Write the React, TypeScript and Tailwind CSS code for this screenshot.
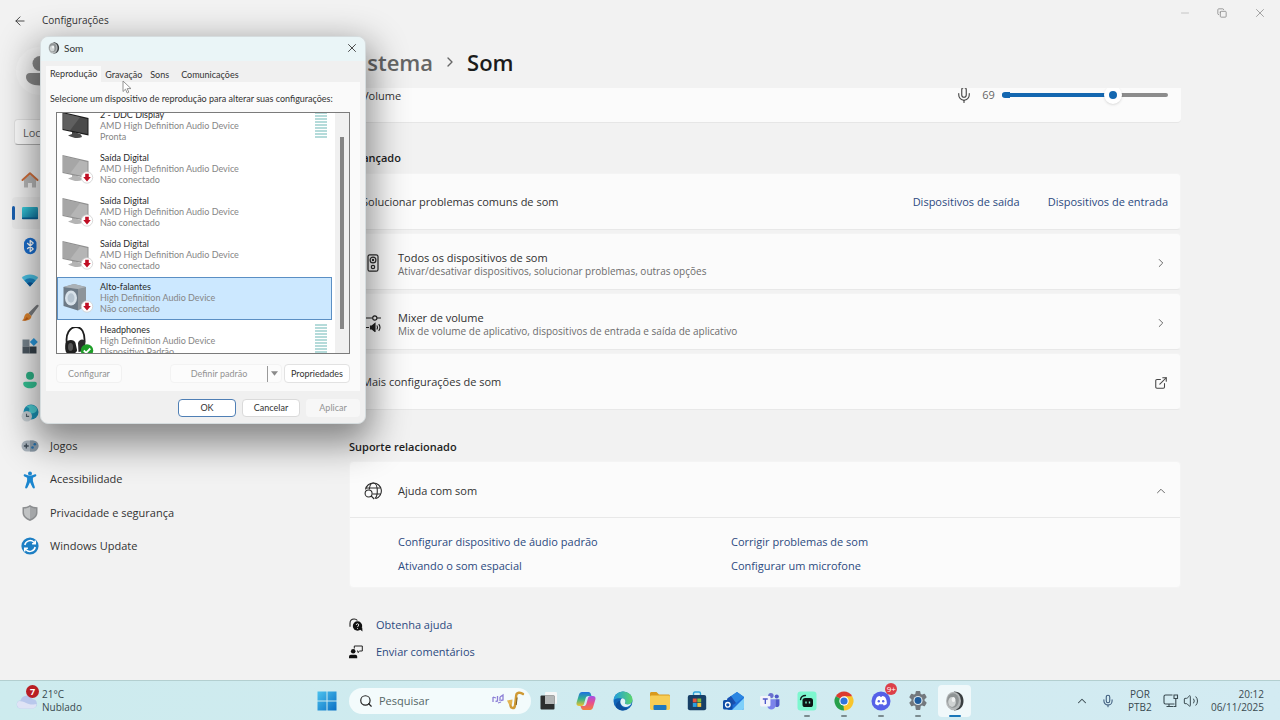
import { useState } from "react";
import type { ReactNode } from "react";
import { ArrowLeft, ChevronDown, ChevronRight, ChevronUp, Copy, ExternalLink, Mic, Minus, Search, Volume2, X } from "lucide-react";

/* ---------- Ícones da barra lateral ---------- */

const HomeIcon = () => (
  <svg viewBox="0 0 18 18" className="h-[18px] w-[18px]">
    <path d="M3 8.5 9 3.5l6 5V16a.6.6 0 0 1-.6.6H11V12H7v4.6H3.6A.6.6 0 0 1 3 16z" fill="#b9b9b9" />
    <path d="M1.5 9 9 2.2 16.5 9" fill="none" stroke="#d2703c" strokeWidth="2" strokeLinecap="round" strokeLinejoin="round" />
  </svg>
);

const SystemIcon = () => (
  <svg viewBox="0 0 18 18" className="h-[18px] w-[18px]">
    <defs>
      <linearGradient id="sys" x1="0" y1="0" x2="1" y2="1">
        <stop offset="0" stopColor="#3bd3e0" />
        <stop offset="1" stopColor="#0f6d9c" />
      </linearGradient>
    </defs>
    <rect x="1" y="3" width="16" height="12" rx="1.2" fill="url(#sys)" />
    <rect x="1" y="13.5" width="16" height="1.8" rx=".8" fill="#0a5f93" />
  </svg>
);

const BluetoothIcon = () => (
  <svg viewBox="0 0 18 18" className="h-[18px] w-[18px]">
    <rect x="3" y=".8" width="12.5" height="16.4" rx="6.2" fill="#1a6fd0" />
    <path d="m6.2 6 6 6L9.200 14.5V3.5L12.200 6l-6 6" fill="none" stroke="#fff" strokeWidth="1.3" strokeLinejoin="round" />
  </svg>
);

const WifiIcon = () => (
  <svg viewBox="0 0 18 18" className="h-[18px] w-[18px]">
    <path d="M9 15.5.8 6.8C5.2 2.4 12.8 2.4 17.2 6.8z" fill="#4cc3e6" />
    <path d="M9 15.5 3.4 9.500c3.100-2.900 8.100-2.900 11.200 0z" fill="#1b86c5" />
    <path d="M9 15.5 6 12.300c1.700-1.500 4.300-1.500 6 0z" fill="#0f5596" />
  </svg>
);

const BrushIcon = () => (
  <svg viewBox="0 0 18 18" className="h-[18px] w-[18px]">
    <path d="M17.3.9c.6.6.3 1.300-.1 1.900L10.400 12 7.300 9.300 15.300 1.300c.6-.6 1.400-.9 2-.4z" fill="#7c7f83" />
    <path d="M7.3 9.300 10.400 12c.2 3.500-4.600 5.600-9.400 4.300 2.100-.9 1.600-2.700 2.700-4.900.8-1.600 2-2.200 3.600-2.100z" fill="#e0862f" />
    <path d="M1 16.300c2.300-.3 3.600-1.500 4.700-3.400l1.800 1.500C5.600 16.400 3.500 17 1 16.300z" fill="#c35f16" />
  </svg>
);

const AppsIcon = () => (
  <svg viewBox="0 0 18 18" className="h-[18px] w-[18px]">
    <rect x="1.5" y="2.5" width="7" height="7" fill="#7a8791" />
    <rect x="1.5" y="9.5" width="7" height="7" fill="#4d5962" />
    <rect x="8.5" y="9.5" width="7" height="7" fill="#36424b" />
    <path d="m12.8.9 4 4-4 4-4-4z" fill="#2a9be0" />
  </svg>
);

const AccountIcon = () => (
  <svg viewBox="0 0 18 18" className="h-[18px] w-[18px]">
    <circle cx="9" cy="4.8" r="4" fill="#2fb488" />
    <path d="M2.2 12.500c0-1 .8-1.800 1.800-1.800h10c1 0 1.800.8 1.800 1.800 0 3-2.800 4.800-6.800 4.800s-6.800-1.800-6.800-4.800z" fill="#35c596" />
  </svg>
);

const ClockIcon = () => (
  <svg viewBox="0 0 18 18" className="h-[18px] w-[18px]">
    <circle cx="10" cy="8" r="7.5" fill="#1c94b8" />
    <path d="M5 3c3 0 4 2 3 4s2 3 5 2 4-4 2-6a7.500 7.500 0 0 0-10 0z" fill="#4fd0d6" />
    <circle cx="5.8" cy="12.2" r="5.2" fill="#c9d1d6" />
    <path d="M5.5 9.800v2.600h2.600" fill="none" stroke="#50606a" strokeWidth="1.1" />
  </svg>
);

const GamesIcon = () => (
  <svg viewBox="0 0 18 18" className="h-[18px] w-[18px]">
    <rect x=".5" y="3.5" width="17" height="11" rx="5.5" fill="#a9b3bc" />
    <path d="M9 3.5h3a5.500 5.500 0 0 1 0 11H9z" fill="#8796a3" />
    <path d="M5.3 6.600v4.800M2.900 9h4.800" stroke="#3d4a55" strokeWidth="1.3" />
    <circle cx="13.8" cy="7.3" r="1.3" fill="#256ea8" />
    <circle cx="11.5" cy="10.5" r="1.3" fill="#256ea8" />
  </svg>
);

const AccessibilityIcon = () => (
  <svg viewBox="0 0 18 18" className="h-[18px] w-[18px]">
    <circle cx="9" cy="2.4" r="2" fill="#1b86cf" />
    <path d="M2.8 3.800c.5-.7 1.200-.6 1.800-.3 2.800 1.500 6 1.500 8.800 0 .7-.3 1.400-.3 1.800.3.3.7 0 1.400-.7 1.700l-2.600 1.200v3.400l1.900 5.800c.2.700-.1 1.300-.8 1.500-.7.200-1.200-.2-1.500-.8L9 11.300l-2.500 5.300c-.3.600-.8 1-1.500.8-.7-.2-1-.8-.8-1.500l1.900-5.800V6.700L3.500 5.500c-.7-.3-1-1-.7-1.700z" fill="#1b86cf" />
  </svg>
);

const ShieldIcon = () => (
  <svg viewBox="0 0 18 18" className="h-[18px] w-[18px]">
    <path d="M9 1c2 1.700 4.600 2.200 7.500 2.200v5.300c0 4-3 6.700-7.500 8.500C4.500 15.200 1.500 12.500 1.500 8.500V3.200C4.400 3.200 7 2.700 9 1z" fill="#8b8d8f" />
    <path d="M9 2.800c1.700 1.200 3.700 1.700 6 1.800v3.900c0 3.200-2.300 5.300-6 6.800z" fill="#a4a6a8" />
    <path d="M9 2.800C7.300 4 5.300 4.500 3 4.600v3.900c0 3.200 2.300 5.300 6 6.800z" fill="#c0c2c3" />
  </svg>
);

const UpdateIcon = () => (
  <svg viewBox="0 0 18 18" className="h-[18px] w-[18px]">
    <circle cx="9" cy="9" r="8.6" fill="#1d7fc4" />
    <path d="M3.8 8A5.400 5.400 0 0 1 13 5.300L14.300 6.600M14.300 3.600v3.200h-3.200M14.200 10A5.400 5.400 0 0 1 5 12.700L3.700 11.400M3.700 14.400v-3.200h3.200" fill="none" stroke="#fff" strokeWidth="1.5" />
  </svg>
);

/* ---------- Ícones do conteúdo ---------- */

const SpeakerBoxIcon = () => (
  <svg viewBox="0 0 18 18" className="h-[18px] w-[18px]" fill="none" stroke="#2b2b2b" strokeWidth="1.2">
    <rect x="4" y=".8" width="10" height="16.4" rx="1.8" />
    <circle cx="9" cy="6" r="2.9" />
    <circle cx="9" cy="6" r=".6" fill="#2b2b2b" />
    <circle cx="9" cy="13" r="1.7" />
  </svg>
);

const MixerIcon = () => (
  <svg viewBox="0 0 18 18" className="h-[18px] w-[18px]" fill="none" stroke="#1f1f1f" strokeWidth="1.1">
    <path d="M1 4h7.500M13 4h4M1 13.500h4" />
    <circle cx="10.800" cy="4" r="2.1" />
    <path d="M6.500 12h1.500l3-2.500v8L8 15H6.500z" fill="#1f1f1f" />
    <path d="M12.800 11.500c.8 1.200.8 2.800 0 4M14.700 10.200c1.500 1.900 1.500 4.700 0 6.600" />
  </svg>
);

const GlobeSearchIcon = () => (
  <svg viewBox="0 0 18 18" className="h-[18px] w-[18px]" fill="none" stroke="#2b2b2b" strokeWidth="1.1">
    <path d="M1.500 7.500a8 8 0 1 1 10.300 9.100" />
    <path d="M5.300 7.500C5.600 3.800 7.100 1 9.300 1c2.400 0 4 3.500 4 8 0 3.500-.9 6.300-2.400 7.500M2 6h14.700M8.500 12h8.200" />
    <circle cx="4.600" cy="11.5" r="3.5" />
    <path d="m7.200 14 3 3" />
  </svg>
);

const HelpIcon = () => (
  <svg viewBox="0 0 14 14" className="h-3.5 w-3.5">
    <path d="M1 7.500V5.300C1 2.800 2.800 1 5.200 1c1.400 0 2.500.6 3.200 1.500M1 6.500v2.300" fill="none" stroke="#222" strokeWidth="1.1" />
    <circle cx="8.500" cy="8" r="4.7" fill="#111" />
    <path d="m10.500 11 3 2.500-.3-4z" fill="#111" />
    <path d="M7.200 7c0-1.700 2.600-1.700 2.600 0 0 1-1.300 1-1.300 2.100M8.500 10v.8" fill="none" stroke="#f2f2f2" strokeWidth=".9" />
  </svg>
);

const FeedbackIcon = () => (
  <svg viewBox="0 0 14 14" className="h-3.5 w-3.5">
    <circle cx="4.200" cy="6.300" r="2.3" fill="#111" />
    <path d="M0 13.300v-1.600c0-1 .8-1.900 1.800-1.900h4.600c1 0 1.800.9 1.800 1.900v1.600z" fill="#111" />
    <path d="M5.300 3.500V1h8v5h-2.600L9 7.600V6H8" fill="none" stroke="#222" strokeWidth="1" />
  </svg>
);

/* ---------- Ícones da janela Som ---------- */

const SpeakerConeIcon = ({ className }: { className: string }) => (
  <svg viewBox="0 0 20 20" className={className}>
    <path d="M9 .5c6 0 9.500 4 9.500 9.500S15 19.500 9 19.500z" fill="#3a3e40" />
    <ellipse cx="8.500" cy="10" rx="7.5" ry="9.2" fill="#b4b8b9" />
    <ellipse cx="8" cy="9.500" rx="5.8" ry="7.3" fill="#8f9495" />
    <ellipse cx="7" cy="11" rx="3.8" ry="5" fill="#cfd3d3" />
    <ellipse cx="8.500" cy="8.500" rx="1.8" ry="2.5" fill="#f0f2f2" />
  </svg>
);

const DownBadge = () => (
  <g>
    <circle cx="25" cy="22.500" r="5.700" fill="#fff" stroke="#c9c9c9" strokeWidth=".7" />
    <path d="M23.200 18.800h3.600v3.200h2L25 26.400l-3.800-4.400h2z" fill="#c00e24" />
  </g>
);

const MonitorIcon = ({ off }: { off?: boolean }) => (
  <svg viewBox="0 0 32 30" className="h-[30px] w-8">
    <path d="m10 19 9 3.500 1 2.500c-4 2-9 1-14-1.500l4-1.500z" fill={off ? "#b4b4b4" : "#4b4b4b"} />
    <path d="M.5 0 26.500 6v17.500L.5 18z" fill={off ? "#8f8f8f" : "#1c1c1c"} />
    <path d="M1.200 1.200 25.500 7v15L1.200 17z" fill={off ? "#b5b5b5" : "#4a4a4a"} />
    <path d="M1.200 1.200 18 5.200 8 18.400 1.200 17z" fill={off ? "#a6a6a6" : "#5f5f5f"} />
    {off && <DownBadge />}
  </svg>
);

const SpeakerIcon = () => (
  <svg viewBox="0 0 32 30" className="h-[30px] w-8">
    <path d="M1.500 3 12 0l12 3v19l-8 4.500z" fill="#8d949a" />
    <path d="m1.500 3 14.500 2v21.500L1.500 22z" fill="#6d7a86" />
    <path d="M1.500 3 12 0l12 3-8 2z" fill="#aab1b7" />
    <ellipse cx="9" cy="14" rx="6" ry="7.500" fill="#d8e2ea" />
    <ellipse cx="9" cy="14" rx="3.500" ry="4.700" fill="#b6c4d0" />
    <DownBadge />
  </svg>
);

const HeadphonesIcon = () => (
  <svg viewBox="0 0 32 30" className="h-[30px] w-8">
    <path d="M5 17C3 7 8 0 14 0c6 0 9 6 8.500 15" fill="none" stroke="#1d1d1d" strokeWidth="1.800" />
    <path d="M3.500 16c2-4 9-4 10 0l1.500 7c0 4-9 6-11 2-1-2-1-6-.5-9z" fill="#1f1f1f" />
    <path d="M16 16c1-4 6-5 7.500-1l-1 9-6 1z" fill="#2c2c2c" />
    <ellipse cx="8.500" cy="20" rx="2.500" ry="4" fill="#555" />
    <circle cx="25" cy="23.500" r="6.200" fill="#1e9e28" />
    <path d="m21.800 23.500 2.300 2.300 4.200-4.300" fill="none" stroke="#fff" strokeWidth="1.800" />
  </svg>
);

/* ---------- Ícones da barra de tarefas ---------- */

const WindowsIcon = () => (
  <svg viewBox="0 0 20 20" className="h-5 w-5">
    <defs>
      <linearGradient id="win" x1="0" y1="0" x2="1" y2="1">
        <stop offset="0" stopColor="#4cc2ee" />
        <stop offset="1" stopColor="#0a6fc4" />
      </linearGradient>
    </defs>
    <path d="M.5.500h9v9h-9zM10.500.500h9v9h-9zM.500 10.500h9v9h-9zM10.500 10.500h9v9h-9z" fill="url(#win)" />
  </svg>
);

const SaxIcon = () => (
  <svg viewBox="0 0 34 20" className="h-5 w-[34px]">
    <path d="M2 6v5M2 6l3 1M6.500 5v5l-2 .5M9 6v4M9 6l3-2v5l-2 .5M7 12l3-1" stroke="#8c7fd6" strokeWidth="1.300" fill="none" />
    <path d="M32 3c-2.500-2-6.500-1.800-6.800 1.500L24 14.500c-.4 3.600-4.200 3.200-4.500 0L19 10.500" fill="none" stroke="#cf9a35" strokeWidth="2.400" strokeLinecap="round" />
    <path d="m16 9.500 5.500-1-.5 5h-3z" fill="#e3b450" />
    <path d="M26.200 6.500 25.200 14" stroke="#7d5a1b" strokeWidth="1" />
  </svg>
);

const TaskViewIcon = () => (
  <svg viewBox="0 0 20 20" className="h-5 w-5">
    <rect x="6" y="1" width="12" height="12" rx="1" fill="#f4f6f6" />
    <rect x="1.500" y="4.500" width="14" height="14" rx="1" fill="#2c2e2e" />
    <rect x="6" y="4.500" width="9.500" height="8.500" fill="#b3b6b6" />
  </svg>
);

const CopilotIcon = () => (
  <svg viewBox="0 0 20 20" className="h-5 w-5">
    <defs>
      <linearGradient id="copA" x1="0" y1="0" x2="0" y2="1">
        <stop offset="0" stopColor="#1b6fe0" />
        <stop offset=".5" stopColor="#33b38d" />
        <stop offset="1" stopColor="#f0c22d" />
      </linearGradient>
      <linearGradient id="copB" x1="0" y1="0" x2="0" y2="1">
        <stop offset="0" stopColor="#a450e8" />
        <stop offset=".5" stopColor="#e8508c" />
        <stop offset="1" stopColor="#f2803a" />
      </linearGradient>
    </defs>
    <path d="M6 1h6.500c1.500 0 2 1 2.400 2.200L15.500 5h-3c-1.500 0-2.400.8-2.900 2.300L8 13c-.4 1.300-1.300 2-2.700 2H3.200C1 15 0 13.500.6 11.500L3 3.500C3.500 2 4.500 1 6 1z" fill="url(#copA)" />
    <path d="M14 19H7.500c-1.500 0-2-1-2.400-2.200L4.500 15h3c1.500 0 2.400-.8 2.900-2.300L12 7c.4-1.300 1.300-2 2.700-2h2.100c2.200 0 3.200 1.500 2.600 3.500L17 16.500c-.5 1.500-1.500 2.500-3 2.500z" fill="url(#copB)" />
  </svg>
);

const EdgeIcon = () => (
  <svg viewBox="0 0 20 20" className="h-5 w-5">
    <defs>
      <linearGradient id="edg" x1="0" y1="0" x2="1" y2="0">
        <stop offset="0" stopColor="#1f9be0" />
        <stop offset="1" stopColor="#5cd66b" />
      </linearGradient>
    </defs>
    <circle cx="10" cy="10" r="9.500" fill="#1166b8" />
    <path d="M.5 9.500C1 4 5 .500 10 .500c5.500 0 9.500 4 9.500 8 0 3-2 5-4.800 5-2 0-3.200-.8-2.700-1.700.8-1 .6-4.300-2.800-4.500C5 7 1.500 7.500.500 9.500z" fill="url(#edg)" />
    <path d="M7.300 10c-1 4.500 2.500 8 8 7-3 3-8 3.200-11 .6C1 14.500 4 10 7.300 10z" fill="#0d4f9c" />
    <path d="M9.200 7.300c3.400.2 3.600 3.500 2.800 4.500-.5.900.7 1.700 2.700 1.700 1.600 0 3-.6 3.900-1.700-.8 2.500-3 4.200-6 4.200-4 0-6-4-5-6.700.3-1 .8-1.700 1.600-2z" fill="#e2f3f6" />
  </svg>
);

const FolderIcon = () => (
  <svg viewBox="0 0 22 20" className="h-5 w-[22px]">
    <path d="M1 2.500C1 1.700 1.600 1 2.500 1h5L10 3.500h9.500c.8 0 1.500.7 1.500 1.500v4H1z" fill="#d99a1e" />
    <rect x="1" y="4.500" width="20" height="14.500" rx="1.400" fill="#f7cd55" />
    <rect x="4.500" y="14" width="13" height="5" rx="1" fill="#1f78c0" />
  </svg>
);

const StoreIcon = () => (
  <svg viewBox="0 0 20 20" className="h-5 w-5">
    <path d="M6.500 5V2.500C6.500 1.700 7 1 8 1h4c1 0 1.500.7 1.500 1.500V5" fill="none" stroke="#2fa5dc" strokeWidth="1.400" />
    <rect x=".8" y="4" width="18.400" height="15.300" rx="2" fill="#173f66" />
    <rect x="5.800" y="7.500" width="3.900" height="3.900" fill="#e8553a" />
    <rect x="10.300" y="7.500" width="3.900" height="3.900" fill="#86bd3a" />
    <rect x="5.800" y="12" width="3.900" height="3.900" fill="#2ba0e0" />
    <rect x="10.300" y="12" width="3.900" height="3.900" fill="#f6c13a" />
  </svg>
);

const OutlookIcon = () => (
  <svg viewBox="0 0 22 20" className="h-5 w-[22px]">
    <path d="M4 8 14 1l7 5v11c0 1-.7 2-2 2H6c-1.200 0-2-1-2-2z" fill="#1d6fd8" />
    <path d="m5 7 9-6 7 5-11 8z" fill="#2a86e2" />
    <path d="M21 7v10c0 1-.7 2-2 2H9z" fill="#7fd0fa" />
    <path d="m4 8 6 6 3-2L8 5z" fill="#1b4fae" />
    <rect x="0" y="9" width="9.500" height="9.500" rx="1.600" fill="#0f4fa8" />
    <circle cx="4.800" cy="13.800" r="2.300" fill="none" stroke="#fff" strokeWidth="1.300" />
  </svg>
);

const TeamsIcon = () => (
  <svg viewBox="0 0 22 20" className="h-[18px] w-5">
    <circle cx="12" cy="4" r="3" fill="#6a70cf" />
    <circle cx="18.500" cy="5" r="2.300" fill="#5059c9" />
    <path d="M8 8h9v7c0 6-9 6-9 0z" fill="#7b83eb" />
    <path d="M17 8h4.500v5.500c0 3-2.500 3.800-4.500 3z" fill="#5059c9" />
    <rect x="0" y="4.500" width="11.500" height="11.500" rx="1.200" fill="#f3f3fb" />
    <path d="M3 7.800h5.500M5.800 7.800v5.500" stroke="#5059c9" strokeWidth="1.500" />
  </svg>
);

const RobotIcon = () => (
  <svg viewBox="0 0 20 20" className="h-5 w-5">
    <rect x=".5" y=".5" width="19" height="19" rx="3" fill="#7df7cf" />
    <path d="M3.500 8.500C4 6 6 4.500 8.500 4.500" fill="none" stroke="#101b1a" strokeWidth="1.300" strokeLinecap="round" />
    <rect x="5.500" y="7" width="10.500" height="9" rx="2.600" fill="#0d1514" />
    <path d="M9 10.500v2M12.500 10.500v2" stroke="#7df7cf" strokeWidth="1.400" />
  </svg>
);

const ChromeIcon = () => (
  <svg viewBox="0 0 20 20" className="h-5 w-5">
    <path d="M10 10 1.800 5.200a9.500 9.500 0 0 1 16.400 0z" fill="#dc3b2f" />
    <path d="M10 10 1.800 5.200A9.500 9.500 0 0 0 10 19.500z" fill="#27a04b" />
    <path d="M10 10h-1L10 19.500A9.500 9.500 0 0 0 18.200 5.200H10z" fill="#f8c52c" />
    <circle cx="10" cy="10" r="4.700" fill="#fff" />
    <circle cx="10" cy="10" r="3.600" fill="#2f74dd" />
  </svg>
);

const DiscordIcon = () => (
  <svg viewBox="0 0 20 20" className="h-5 w-5">
    <circle cx="10" cy="10" r="9.500" fill="#5560e8" />
    <path d="M6 6c1-.6 2-.9 2.800-1l.3.700h1.800l.3-.7c.9.100 1.900.4 2.800 1 1.500 2.300 2 4.500 1.800 7-1 .8-2 1.200-3.100 1.500l-.8-1.300H8.100l-.8 1.300c-1.100-.3-2.100-.7-3.100-1.500C4 10.500 4.500 8.300 6 6z" fill="#fff" />
    <circle cx="7.800" cy="10.300" r="1.200" fill="#5560e8" />
    <circle cx="12.200" cy="10.300" r="1.200" fill="#5560e8" />
  </svg>
);

const GearIcon = () => (
  <svg viewBox="0 0 20 20" className="h-5 w-5">
    <path d="M8.400.800h3.200l.5 2.500 1.700 1 2.500-.9 1.600 2.800-2 1.700v2.200l2 1.700-1.600 2.800-2.500-.9-1.700 1-.5 3.500H8.400l-.5-3.500-1.700-1-2.500.9-1.600-2.800 2-1.700V7.900l-2-1.700 1.600-2.800 2.500.9 1.700-1z" fill="#73787d" stroke="#73787d" strokeWidth="1.400" strokeLinejoin="round" />
    <circle cx="10" cy="9.500" r="4.600" fill="#dbe6ec" />
    <circle cx="10" cy="9.500" r="3.400" fill="#1f5c9c" />
  </svg>
);

const CloudIcon = () => (
  <svg viewBox="0 0 22 16" className="h-4 w-[22px]">
    <path d="M5 15.500a4 4 0 0 1-.5-8A6.500 6.500 0 0 1 16.500 6a4.800 4.800 0 0 1 .5 9.500z" fill="#b9c8ec" />
    <path d="M5 15.500a4 4 0 0 1-2-7.500c5 0 9 4 14.500 3.500l3-.5a4.700 4.700 0 0 1-3.500 4.500z" fill="#dfe3f5" />
  </svg>
);

const NetworkIcon = () => (
  <svg viewBox="0 0 16 16" className="h-4 w-4" fill="none" stroke="#3a4a50" strokeWidth="1.100">
    <path d="M9.500 2H2.500C1.700 2 1 2.700 1 3.500v6c0 .8.700 1.500 1.500 1.500h9M6 11v2.500M3.500 13.500h7" />
    <path d="M11 2v3.500h3.500V2zM12.800 5.500v8h-2" />
  </svg>
);

/* ---------- Dados ---------- */

const navItems: { label: string; icon: ReactNode; active?: boolean; iconOnly?: boolean }[] = [
  { label: "Início", icon: <HomeIcon />, iconOnly: true },
  { label: "Sistema", icon: <SystemIcon />, active: true, iconOnly: true },
  { label: "Bluetooth e dispositivos", icon: <BluetoothIcon />, iconOnly: true },
  { label: "Rede e Internet", icon: <WifiIcon />, iconOnly: true },
  { label: "Personalização", icon: <BrushIcon />, iconOnly: true },
  { label: "Aplicativos", icon: <AppsIcon />, iconOnly: true },
  { label: "Contas", icon: <AccountIcon />, iconOnly: true },
  { label: "Hora e idioma", icon: <ClockIcon />, iconOnly: true },
  { label: "Jogos", icon: <GamesIcon /> },
  { label: "Acessibilidade", icon: <AccessibilityIcon /> },
  { label: "Privacidade e segurança", icon: <ShieldIcon /> },
  { label: "Windows Update", icon: <UpdateIcon /> },
];

const devices = [
  { name: "2 - DDC Display", driver: "AMD High Definition Audio Device", status: "Pronta", icon: <MonitorIcon />, meter: true },
  { name: "Saída Digital", driver: "AMD High Definition Audio Device", status: "Não conectado", icon: <MonitorIcon off /> },
  { name: "Saída Digital", driver: "AMD High Definition Audio Device", status: "Não conectado", icon: <MonitorIcon off /> },
  { name: "Saída Digital", driver: "AMD High Definition Audio Device", status: "Não conectado", icon: <MonitorIcon off /> },
  { name: "Alto-falantes", driver: "High Definition Audio Device", status: "Não conectado", icon: <SpeakerIcon /> },
  { name: "Headphones", driver: "High Definition Audio Device", status: "Dispositivo Padrão", icon: <HeadphonesIcon />, meter: true },
];

const taskbarApps: { name: string; icon: ReactNode; running?: boolean; active?: boolean; badge?: string }[] = [
  { name: "Visão de tarefas", icon: <TaskViewIcon /> },
  { name: "Copilot", icon: <CopilotIcon /> },
  { name: "Edge", icon: <EdgeIcon /> },
  { name: "Explorador de Arquivos", icon: <FolderIcon /> },
  { name: "Microsoft Store", icon: <StoreIcon /> },
  { name: "Outlook", icon: <OutlookIcon /> },
  { name: "Teams", icon: <TeamsIcon /> },
  { name: "Assistente", icon: <RobotIcon />, running: true },
  { name: "Chrome", icon: <ChromeIcon />, running: true },
  { name: "Discord", icon: <DiscordIcon />, running: true, badge: "9+" },
  { name: "Configurações", icon: <GearIcon />, running: true },
  { name: "Som", icon: <SpeakerConeIcon className="h-5 w-5" />, active: true },
];

/* ---------- Configurações ---------- */

const Sidebar = () => (
  <aside className="w-[349px] shrink-0 pt-2 pl-3">
    <div className="ml-1 flex h-12 w-12 items-center justify-center rounded-full bg-[#f7f7f7]">
      <svg viewBox="0 0 32 32" className="h-8 w-8" fill="#8a8a8a">
        <circle cx="16" cy="8.500" r="7.500" />
        <path d="M2 22c0-2.500 1.500-4 4-4h20c2.500 0 4 1.500 4 4 0 5-6 8.500-14 8.500S2 27 2 22z" />
      </svg>
    </div>
    <input
      type="search"
      aria-label="Localizar uma configuração"
      placeholder="Localizar uma configuração"
      className="mt-6 ml-0.5 h-[26px] w-[316px] rounded-sm border border-[#e2e2e2] border-b-[#b0b0b0] bg-[#fcfcfc] px-2 text-[11px] placeholder:text-[#5f5f5f]"
    />
    <nav className="mt-[18px] grid h-[400px] grid-rows-12">
      {navItems.map((item) => (
        <a
          key={item.label}
          href="#"
          aria-label={item.label}
          className={`my-px flex items-center rounded-sm text-[11px] text-[#333] ${item.active ? "bg-[#eaeaea]" : ""}`}
        >
          <span className={`h-3.5 w-[3px] rounded-full ${item.active ? "bg-[#1a5fae]" : ""}`} />
          <span className="mx-1.5">{item.icon}</span>
          {!item.iconOnly && <span className="pl-[5px]">{item.label}</span>}
        </a>
      ))}
    </nav>
  </aside>
);

const SettingsCard = ({ children }: { children: ReactNode }) => (
  <div className="mb-[3px] flex h-[57px] items-center rounded-sm border border-[#f4f4f4] border-b-[#e8e8e8] bg-[#fbfbfb] px-3 pt-0.5">
    {children}
  </div>
);

const NavCard = ({ icon, title, text }: { icon: ReactNode; title: string; text: string }) => (
  <SettingsCard>
    <span className="ml-0.5 w-[34px]">{icon}</span>
    <div className="flex-1 pt-0.5">
      <p className="text-[11px] leading-[15px] text-[#2f2f2f]">{title}</p>
      <p className="text-[10px] leading-[13px] text-[#6c6c6c]">{text}</p>
    </div>
    <ChevronRight className="h-3.5 w-3.5 text-[#555]" strokeWidth={1.5} />
  </SettingsCard>
);

const SoundSettings = () => {
  const [volume, setVolume] = useState(69);

  return (
    <main className="mr-[99px] flex min-w-0 flex-1 flex-col text-[11px]">
      <h1 className="flex h-[49px] items-center pb-[3px] text-[22px] font-semibold text-[#1b1b1b]">
        <span className="text-[#666]">Sistema</span>
        <ChevronRight className="mx-[9px] h-4 w-4 text-[#666]" />
        Som
      </h1>

      <div className="h-[35px] shrink-0 overflow-hidden rounded-b-sm border-b border-[#e6e6e6] bg-[#fbfbfb] px-[13px]">
        <div className="flex h-3.5 items-center">
          <label htmlFor="volume" className="flex-1 pt-0.5 text-[#333]">Volume</label>
          <Mic className="h-[18px] w-[18px] text-[#444]" strokeWidth={1.5} />
          <span className="w-[29px] pl-0.5 text-center text-[#666]">{volume}</span>
          <div className="relative flex w-[166px] items-center">
            <span className="absolute left-0 h-1.5 w-2 rounded-l-full bg-[#1467b0]" />
            <input
              id="volume"
              type="range"
              min={0}
              max={100}
              value={volume}
              onChange={(e) => setVolume(Number(e.target.value))}
              className="h-[18px] w-full appearance-none bg-transparent [&::-webkit-slider-runnable-track]:h-1 [&::-webkit-slider-runnable-track]:rounded-full [&::-webkit-slider-runnable-track]:bg-linear-to-r [&::-webkit-slider-runnable-track]:from-[#1467b0] [&::-webkit-slider-runnable-track]:from-67% [&::-webkit-slider-runnable-track]:to-[#8c8c8c] [&::-webkit-slider-runnable-track]:to-67% [&::-webkit-slider-thumb]:-mt-[7px] [&::-webkit-slider-thumb]:h-[18px] [&::-webkit-slider-thumb]:w-[18px] [&::-webkit-slider-thumb]:appearance-none [&::-webkit-slider-thumb]:rounded-full [&::-webkit-slider-thumb]:border-[5px] [&::-webkit-slider-thumb]:border-white [&::-webkit-slider-thumb]:bg-[#1467b0] [&::-webkit-slider-thumb]:shadow-sm"
            />
          </div>
        </div>
      </div>

      <h2 className="flex h-[50px] items-end pb-[7px] font-semibold text-[#1f1f1f]">Avançado</h2>
      <SettingsCard>
        <p className="flex-1 text-[#333]">Solucionar problemas comuns de som</p>
        <a href="#" className="text-[#2c4a80]">Dispositivos de saída</a>
        <a href="#" className="ml-7 text-[#2c4a80]">Dispositivos de entrada</a>
      </SettingsCard>
      <NavCard
        icon={<SpeakerBoxIcon />}
        title="Todos os dispositivos de som"
        text="Ativar/desativar dispositivos, solucionar problemas, outras opções"
      />
      <NavCard
        icon={<MixerIcon />}
        title="Mixer de volume"
        text="Mix de volume de aplicativo, dispositivos de entrada e saída de aplicativo"
      />
      <SettingsCard>
        <p className="flex-1 text-[#333]">Mais configurações de som</p>
        <ExternalLink className="h-3.5 w-3.5 text-[#444]" strokeWidth={1.8} />
      </SettingsCard>

      <h2 className="flex h-12 items-end pb-1.5 font-semibold text-[#1f1f1f]">Suporte relacionado</h2>
      <section className="rounded-sm border border-[#f4f4f4] bg-[#fbfbfb]">
        <button className="flex h-14 w-full items-center border-b border-[#e8e8e8] px-3 pt-0.5 text-left">
          <span className="ml-0.5 w-[34px]"><GlobeSearchIcon /></span>
          <span className="flex-1 pt-px text-[#333]">Ajuda com som</span>
          <ChevronUp className="h-3.5 w-3.5 text-[#555]" strokeWidth={1.5} />
        </button>
        <div className="grid grid-cols-[333px_1fr] gap-y-2 pt-4 pb-[13px] pl-12 leading-4 text-[#2c4a80]">
          <a href="#">Configurar dispositivo de áudio padrão</a>
          <a href="#">Corrigir problemas de som</a>
          <a href="#">Ativando o som espacial</a>
          <a href="#">Configurar um microfone</a>
        </div>
      </section>

      <div className="mt-[29px] flex flex-col items-start gap-[11px] leading-4 text-[#2c4a80]">
        <a href="#" className="flex items-center gap-[13px]"><HelpIcon />Obtenha ajuda</a>
        <a href="#" className="flex items-center gap-[13px]"><FeedbackIcon />Enviar comentários</a>
      </div>
    </main>
  );
};

const SettingsWindow = () => (
  <div className="flex min-h-0 flex-1 flex-col overflow-hidden">
    <header className="flex h-[39px] shrink-0 items-center pr-[13px] text-[10px] text-[#333]">
      <button aria-label="Voltar" className="mt-0.5 mr-[15px] ml-[13px]">
        <ArrowLeft className="h-3.5 w-3.5" strokeWidth={1.5} />
      </button>
      <span className="flex-1 pt-0.5">Configurações</span>
      <div className="flex items-center gap-[26px] self-start pt-1.5 text-[#8a8a8a]">
        <button aria-label="Minimizar"><Minus className="h-3 w-3 text-[#b5b5b5]" strokeWidth={1.5} /></button>
        <button aria-label="Restaurar"><Copy className="h-2.5 w-2.5 -scale-x-100 -rotate-90" strokeWidth={2} /></button>
        <button aria-label="Fechar"><X className="h-3.5 w-3.5" strokeWidth={1.3} /></button>
      </div>
    </header>
    <div className="flex min-h-0 flex-1">
      <Sidebar />
      <SoundSettings />
    </div>
  </div>
);

/* ---------- Janela Som ---------- */

const LevelMeter = () => (
  <div className="flex w-3 flex-col gap-px">
    {Array.from({ length: 10 }, (_, i) => (
      <span key={i} className="h-0.5 bg-[#b5dbda]" />
    ))}
  </div>
);

const tabs = ["Reprodução", "Gravação", "Sons", "Comunicações"];

const SoundDialog = () => {
  const [selected, setSelected] = useState(4);

  return (
    <div
      role="dialog"
      aria-label="Som"
      className="absolute top-9 left-10 w-[326px] rounded-lg border border-[#d5dcde] bg-[#f0f0f0] font-[Lato,'Open_Sans',sans-serif] text-[9px] text-[#333] shadow-[0_14px_36px_6px_rgba(0,0,0,0.45)]"
    >
      <header className="flex h-6 items-center rounded-t-lg bg-[#eaf5f7] pr-1.5 pb-0.5 pl-[7px]">
        <SpeakerConeIcon className="h-3 w-3" />
        <span className="flex-1 pl-1 text-[10px]">Som</span>
        <button aria-label="Fechar"><X className="h-3.5 w-3.5" strokeWidth={1.5} /></button>
      </header>

      <div className="px-[5px]">
        <div role="tablist" className="flex h-[21px] items-end">
          {tabs.map((tab, i) => (
            <button
              key={tab}
              role="tab"
              aria-selected={i === 0}
              className={i === 0 ? "h-4 bg-[#fafafa] px-1 pb-px" : i === 3 ? "h-3.5 pl-2" : "h-3.5 px-1"}
            >
              {tab}
            </button>
          ))}
        </div>

        <div className="bg-[#fafafa] px-2.5 pb-2">
          <p className="-ml-1.5 flex h-[30px] items-center pt-1 whitespace-nowrap">
            Selecione um dispositivo de reprodução para alterar suas configurações:
          </p>
          <div className="flex h-[242px] overflow-hidden border border-[#7b7b7b] bg-white">
            <ul className="-mt-2 flex-1">
              {devices.map((device, i) => (
                <li key={i}>
                  <button
                    onClick={() => setSelected(i)}
                    className={`flex h-[43px] w-[275px] border px-1 pt-[3px] text-left leading-[11px] ${
                      selected === i ? "border-[#5b8fc4] bg-[#cce8ff]" : "border-transparent"
                    }`}
                  >
                    <span className="pt-[3px]">{device.icon}</span>
                    <span className="flex-1 pl-1.5">
                      <span className="block text-[#2a2a2a]">{device.name}</span>
                      <span className="block text-[#858585]">{device.driver}</span>
                      <span className="block text-[#858585]">{device.status}</span>
                    </span>
                    {device.meter && <LevelMeter />}
                  </button>
                </li>
              ))}
            </ul>
            <div className="flex w-3.5 justify-center bg-[#f0f0f0] pt-6">
              <span className="h-48 w-1 bg-[#858585]" />
            </div>
          </div>

          <div className="mt-2.5 flex h-[19px] items-stretch">
            <button disabled className="w-[66px] rounded-sm border border-[#f1f1f1] bg-[#fcfcfc] text-[#939393]">Configurar</button>
            <button disabled className="ml-12 flex flex-1 items-center rounded-sm border border-[#f3f3f3] bg-[#fcfcfc] text-[#939393]">
              <span className="flex-1">Definir padrão</span>
              <span className="h-4 w-px bg-[#9a9a9a]" />
              <svg viewBox="0 0 8 5" className="mx-[3px] h-[5px] w-[7px]" fill="#8a8a8a"><path d="M0 0h8L4 5z" /></svg>
            </button>
            <button className="ml-0.5 w-[66px] rounded-sm border border-[#e2e2e2] bg-white">Propriedades</button>
          </div>
        </div>

        <footer className="flex justify-end gap-1.5 pt-2 pb-1.5">
          <button className="h-[18px] w-[58px] rounded-sm border border-[#4f7fb5] bg-white">OK</button>
          <button className="h-[18px] w-[58px] rounded-sm border border-[#dadada] bg-white">Cancelar</button>
          <button disabled className="h-[18px] w-[54px] rounded-sm bg-[#f7f7f7] text-[#939393]">Aplicar</button>
        </footer>
      </div>
    </div>
  );
};

/* ---------- Barra de tarefas ---------- */

const Taskbar = () => (
  <footer className="flex h-10 shrink-0 items-center border-t border-[#b3cfd0] bg-linear-to-r from-[#cdebee] to-[#d3ebf2] text-[10px] leading-[13px] text-[#3a4a50]">
    <button className="flex flex-1 items-center pl-4 text-left">
      <span className="relative mr-1 flex h-7 items-center">
        <CloudIcon />
        <span className="absolute -top-0.5 left-2.5 flex h-[13px] w-[13px] items-center justify-center rounded-full bg-[#b81f24] text-[9px] font-bold text-white">7</span>
      </span>
      <span>21°C<br />Nublado</span>
    </button>

    <div className="flex items-center pl-2.5">
      <button aria-label="Iniciar"><WindowsIcon /></button>
      <label className="ml-3 flex h-[26px] w-[182px] items-center rounded-full bg-[#f3fbfc] pr-1.5 pl-2.5">
        <Search className="h-3.5 w-3.5 text-[#222]" />
        <input aria-label="Pesquisar" placeholder="Pesquisar" className="min-w-0 flex-1 pl-1.5 text-[11px] placeholder:text-[#566]" />
        <SaxIcon />
      </label>
      <div className="grid w-[442px] grid-cols-12">
        {taskbarApps.map((app) => (
          <button
            key={app.name}
            aria-label={app.name}
            className={`relative mx-0.5 flex h-8 items-center justify-center rounded-sm ${app.active ? "bg-[#f0f8fa]" : ""}`}
          >
            {app.icon}
            {app.badge && (
              <span className="absolute -top-0.5 right-0 flex h-3 w-3 items-center justify-center rounded-full bg-[#dc4048] text-[8px] text-white">
                {app.badge}
              </span>
            )}
            {app.running && <span className="absolute bottom-0 h-0.5 w-1.5 rounded-full bg-[#7b8c90]" />}
            {app.active && <span className="absolute bottom-0 h-0.5 w-3 rounded-full bg-[#1a76b8]" />}
          </button>
        ))}
      </div>
    </div>

    <div className="flex flex-1 items-center justify-end pr-4">
      <ChevronDown className="h-3.5 w-3.5 rotate-180" strokeWidth={1.8} />
      <Mic className="mx-3 h-3.5 w-3.5 text-[#3c5a7c]" strokeWidth={1.8} />
      <span className="w-[26px] text-center">POR<br />PTB2</span>
      <span className="ml-2.5"><NetworkIcon /></span>
      <Volume2 className="mx-1 h-4 w-4" strokeWidth={1.5} />
      <span className="ml-2 text-right">20:12<br />06/11/2025</span>
    </div>
  </footer>
);

const App = () => (
  <div className="relative flex h-screen flex-col overflow-hidden bg-[#f2f2f2] font-['Open_Sans','Noto_Sans',sans-serif]">
    <SettingsWindow />
    <SoundDialog />
    <Taskbar />
    {/* Ponteiro do mouse */}
    <svg viewBox="0 0 10 14" className="absolute top-20 left-[122px] h-3.5 w-2.5">
      <path d="M1 1v10.500l2.500-2.300L5.200 13l1.600-.8L5.200 8.600H9z" fill="#fff" stroke="#888" strokeWidth=".9" />
    </svg>
  </div>
);

export default App;
